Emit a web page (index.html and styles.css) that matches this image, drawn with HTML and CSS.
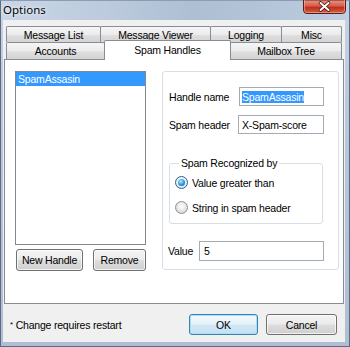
FILE: index.html
```html
<!DOCTYPE html>
<html>
<head>
<meta charset="utf-8">
<title>Options</title>
<link rel="stylesheet" href="styles.css">
</head>
<body>
<div class="window">
  <div class="titlebar">
    <span class="title">Options</span>
    <svg class="close" width="43" height="14" viewBox="0 0 43 14">
      <defs>
        <linearGradient id="cg" x1="0" y1="0" x2="0" y2="1">
          <stop offset="0" stop-color="#e9968a"/>
          <stop offset="0.45" stop-color="#d65a45"/>
          <stop offset="0.55" stop-color="#c0301c"/>
          <stop offset="1" stop-color="#d2644a"/>
        </linearGradient>
      </defs>
      <path d="M0.5 0 V10 Q0.5 13.5 4 13.5 H39 Q42.5 13.5 42.5 10 V0 Z" fill="url(#cg)" stroke="#5e1e16" stroke-width="1"/>
      <path d="M1.5 0 V10 Q1.5 12.5 4 12.5 H39 Q41.5 12.5 41.5 10 V0" fill="none" stroke="#f0b0a4" stroke-opacity="0.6" stroke-width="1"/>
      <path d="M17.5 3 L25.5 10 M25.5 3 L17.5 10" stroke="#4a1510" stroke-width="3.6" stroke-linecap="round" fill="none"/>
      <path d="M17.5 3 L25.5 10 M25.5 3 L17.5 10" stroke="#ffffff" stroke-width="2" stroke-linecap="round" fill="none"/>
    </svg>
  </div>
  <div class="client">
    <div class="tabs">
      <div class="tabrow row1">
        <div class="tab t-msglist">Message List</div>
        <div class="tab t-msgviewer">Message Viewer</div>
        <div class="tab t-logging">Logging</div>
        <div class="tab t-misc">Misc</div>
      </div>
      <div class="tabrow row2">
        <div class="tab t-accounts">Accounts</div>
        <div class="tab t-spam active">Spam Handles</div>
        <div class="tab t-mailbox">Mailbox Tree</div>
      </div>
    </div>
    <div class="page">
      <div class="leftcol">
        <div class="listbox">
          <div class="item selected">SpamAssasin</div>
        </div>
        <div class="btnrow">
          <button class="btn b-new">New Handle</button>
          <button class="btn b-remove">Remove</button>
        </div>
      </div>
      <div class="group">
        <div class="field">
          <span class="label">Handle name</span>
          <div class="input i-name"><span class="sel">SpamAssasin</span></div>
        </div>
        <div class="field f-header">
          <span class="label">Spam header</span>
          <div class="input i-header">X-Spam-score</div>
        </div>
        <fieldset class="subgroup">
          <legend>Spam Recognized by</legend>
          <div class="radio"><span class="rb checked"></span><span>Value greater than</span></div>
          <div class="radio r2"><span class="rb"></span><span>String in spam header</span></div>
        </fieldset>
        <div class="field f-value">
          <span class="label">Value</span>
          <div class="input i-value">5</div>
        </div>
      </div>
    </div>
    <div class="footer">
      <span class="note"><span class="ast">*</span> Change requires restart</span>
      <button class="btn ok">OK</button>
      <button class="btn cancel">Cancel</button>
    </div>
  </div>
</div>
</body>
</html>
```
FILE: styles.css
```css
* { box-sizing: border-box; }
html, body { margin: 0; padding: 0; }
body {
  width: 350px;
  height: 347px;
  overflow: hidden;
  background: #ffffff;
  font-family: "Liberation Sans", Arial, sans-serif;
  font-size: 10.5px;
  letter-spacing: -0.2px;
  color: #000;
}
.window {
  width: 350px;
  height: 347px;
  display: flex;
  flex-direction: column;
  background: linear-gradient(180deg, #c6d4e4 0%, #b9c9dc 30%, #aebfd4 100%);
  border: 1px solid #5b6c82;
  border-top-color: #8c9db2;
  padding: 0 4px 4px 2px;
}
.titlebar {
  height: 19px;
  flex: none;
  display: flex;
  align-items: flex-start;
  background: linear-gradient(90deg, #c8d6e6 0%, #bccbdd 30%, #aebfd4 55%, #b3c4d8 75%, #bfcee0 100%);
  margin: 0 -4px 0 -2px;
  padding: 0 2px 0 2px;
}
.title {
  font-family: "Noto Sans", "Liberation Sans", sans-serif;
  font-size: 11.5px;
  letter-spacing: 0;
  padding-top: 1px;
  color: #000;
  text-shadow: 0 0 4px #eef3f9, 0 0 2px #eef3f9;
}
.close {
  display: block;
  margin-left: auto;
  margin-right: 1px;
  margin-top: -1px;
  flex: 0 0 43px;
}

.client {
  flex: 1;
  background: #f0f0f0;
  display: flex;
  flex-direction: column;
}
.tabs {
  margin-top: 6px;
  padding-left: 3px;
  flex: none;
}
.tabrow {
  display: flex;
}
.row2 {
  height: 18px;
  margin-bottom: -1px;
  position: relative;
  z-index: 1;
  align-items: flex-start;
}
.tab {
  height: 16px;
  border: 1px solid #898c95;
  border-bottom: none;
  border-radius: 2px 2px 0 0;
  margin-left: -1px;
  background: linear-gradient(180deg, #f5f5f5 0%, #ececec 50%, #dedede 55%, #d4d4d4 100%);
  display: flex;
  align-items: center;
  justify-content: center;
  white-space: nowrap;
}
.tabrow .tab:first-child { margin-left: 0; }
.row2 .tab { height: 17px; }
.row2 .tab.active {
  height: 20px;
  margin-top: -2px;
  background: #ffffff;
  align-items: flex-start;
  padding-top: 3px;
  position: relative;
  z-index: 2;
}
.t-msglist { width: 95px; }
.t-msgviewer { width: 111px; }
.t-logging { width: 72px; }
.t-misc { width: 61px; }
.t-accounts { width: 99px; }
.t-spam { width: 127px; }
.t-mailbox { width: 112px; }

.page {
  margin-left: 1px;
  width: 340px;
  height: 245px;
  flex: none;
  background: #ffffff;
  border: 1px solid #898c95;
  display: flex;
  align-items: flex-start;
  padding: 11px 0 0 10px;
}
.leftcol {
  width: 131px;
  display: flex;
  flex-direction: column;
}
.listbox {
  height: 174px;
  border: 1px solid #828790;
  background: #ffffff;
}
.item {
  height: 14px;
  line-height: 14px;
  padding-left: 2px;
}
.item.selected {
  background: #3399ff;
  color: #ffffff;
}
.btnrow {
  display: flex;
  margin-top: 4px;
}
.btn {
  font: inherit;
  letter-spacing: inherit;
  color: #000;
  height: 22px;
  padding: 0;
  border: 1px solid #707070;
  border-radius: 3px;
  background: linear-gradient(180deg, #f4f4f4 0%, #ebebeb 48%, #dddddd 52%, #cfcfcf 100%);
  box-shadow: inset 0 0 0 1px rgba(255,255,255,0.7);
}
.b-new { width: 67px; margin-left: 1px; }
.b-remove { width: 53px; margin-left: 10px; }

.group {
  margin-left: 16px;
  width: 177px;
  height: 199px;
  border: 1px solid #d5dfe5;
  border-radius: 3px;
  box-shadow: inset 1px 1px 0 #ffffff;
  padding: 15px 14px 0 6px;
  display: flex;
  flex-direction: column;
}
.field {
  display: flex;
  align-items: center;
  height: 19px;
}
.input {
  margin-left: auto;
  height: 19px;
  border: 1px solid #a4abb4;
  background: #fff;
  padding-left: 3px;
  display: flex;
  align-items: center;
}
.i-name { width: 85px; padding-left: 2px; }
.i-header { width: 86px; padding-left: 3px; }
.sel { background: #3399ff; color: #fff; line-height: 12px; }
.f-header { margin-top: 9px; }
.subgroup {
  margin: 23px 1px 0 0;
  padding: 7px 0 9px 5px;
  border: 1px solid #d5dfe5;
  border-radius: 3px;
  min-width: 0;
}
.subgroup legend {
  padding: 0 2px;
  margin-left: 4px;
  line-height: 12px;
}
.radio {
  display: flex;
  align-items: center;
  height: 13px;
}
.r2 { margin-top: 12px; }
.rb {
  width: 13px;
  height: 13px;
  border-radius: 50%;
  border: 1px solid #8e8f8f;
  background: radial-gradient(circle at 50% 40%, #ffffff 0%, #e6e6e6 50%, #c9c9c9 100%);
  display: flex;
  align-items: center;
  justify-content: center;
  margin-right: 4px;
  flex: none;
}
.rb.checked {
  border-color: #2c628b;
  background: radial-gradient(circle at 50% 40%, #ffffff 0%, #e4eef6 60%, #c7d8e6 100%);
}
.rb.checked::after {
  content: "";
  width: 7px;
  height: 7px;
  border-radius: 50%;
  background: radial-gradient(circle at 40% 35%, #bdeaff 0%, #3aa7e6 45%, #0d4f8f 100%);
}
.f-value {
  margin-top: 17px;
  height: 20px;
}
.f-value .label { margin-left: -1px; }
.i-value { width: 125px; height: 20px; padding-left: 4px; }

.footer {
  flex: 1;
  display: flex;
  align-items: flex-start;
  padding: 10px 8px 0 7px;
}
.note {
  line-height: 21px;
  margin-right: auto;
}
.ast { font-size: 8px; vertical-align: 2px; }
.footer .btn { height: 21px; }
.ok {
  width: 69px;
  border-color: #3c7fb1;
  box-shadow: inset 0 0 0 1px #a7e1f9;
  background: linear-gradient(180deg, #f2f9fd 0%, #e4f2fa 48%, #d2e7f4 52%, #c4e0f2 100%);
}
.cancel { width: 71px; margin-left: 8px; }
```
